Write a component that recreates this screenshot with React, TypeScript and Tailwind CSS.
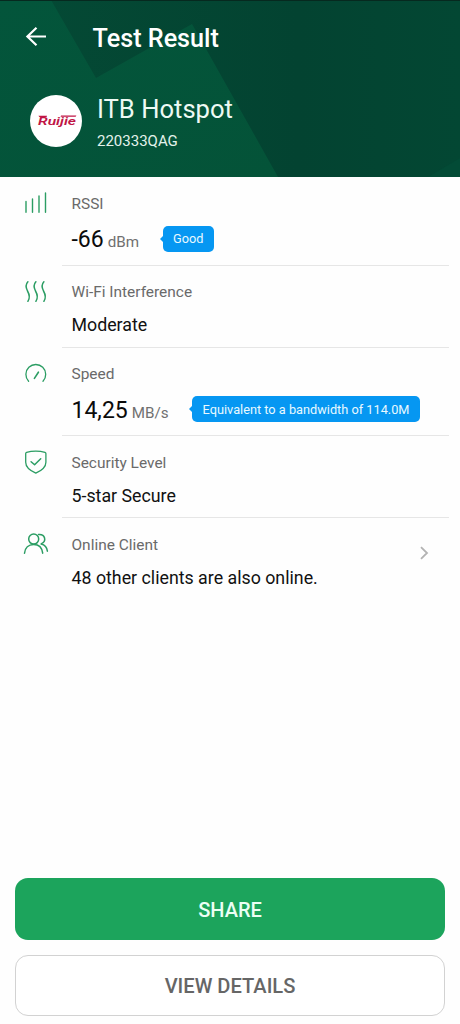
import type { ReactNode } from "react";

function Icon({ children, width = 1.3 }: { children: ReactNode; width?: number }) {
  return (
    <svg viewBox="0 0 26 26" className="h-[26px] w-[26px]" fill="none" stroke="#2b9d63" strokeWidth={width} strokeLinecap="round" strokeLinejoin="round" aria-hidden="true">
      {children}
    </svg>
  );
}

const SignalIcon = () => (
  <Icon width={1.4}>
    <path d="M3 11.5V22.3M9.5 9V22.3M16 6V22.3M22.5 3V22.3" />
  </Icon>
);

const WavesIcon = () => (
  <Icon width={1.5}>
    <path d="M4.9 2.8C2.2 5.7 2.7 8.6 4.5 12C6.7 15.8 7.2 18.8 4.9 22.3" />
    <path d="M12.9 2.8C10.2 5.7 10.7 8.6 12.5 12C14.7 15.8 15.2 18.8 12.9 22.3" />
    <path d="M20.9 2.8C18.2 5.7 18.7 8.6 20.5 12C22.7 15.8 23.2 18.8 20.9 22.3" />
  </Icon>
);

const GaugeIcon = () => (
  <Icon>
    <path d="M5.6 20.2A9.9 9.9 0 1 1 20 20.2" />
    <path d="M11.4 17.4L15.4 11.2" strokeWidth={1.6} />
  </Icon>
);

const ShieldIcon = () => (
  <Icon>
    <path d="M12.8 2.2C9.5 2.2 6 2.7 3.6 3.4Q2.7 3.7 2.7 4.6V13.3C2.7 18.9 8 22.1 12.8 24.2C17.6 22.1 22.9 18.9 22.9 13.3V4.6Q22.9 3.7 22 3.4C19.6 2.7 16.1 2.2 12.8 2.2Z" />
    <path d="M8.1 12.7L11.6 15.7L17.7 9.7" strokeWidth={1.5} />
  </Icon>
);

const ClientsIcon = () => (
  <Icon width={1.5}>
    <circle cx="10.7" cy="8.1" r="5" />
    <path d="M1.5 22.2C2 16.8 5.6 13.4 10.7 13.4S19.1 16.8 19.7 22.2" />
    <path d="M15.5 3.5C22.3 2.9 24 10.4 18.1 12.9C22 13.7 24 16.3 24.4 20.2" />
  </Icon>
);

function Tag({ children }: { children: ReactNode }) {
  return (
    <span className="mb-[4px] ml-[23.5px] flex h-[26px] items-center rounded-[5px] bg-[#0697f2] px-[10.5px] text-[12.75px] whitespace-nowrap text-[#e9f9ff]">
      <svg viewBox="0 0 4 8" className="-ml-[13.5px] mr-[9.5px] h-2 w-1" fill="#0697f2" aria-hidden="true">
        <path d="M4 0L0 4L4 8Z" />
      </svg>
      {children}
    </span>
  );
}

interface RowProps {
  icon: ReactNode;
  label: string;
  value: string;
  unit?: string;
  tag?: string;
  link?: boolean;
  last?: boolean;
}

function Row({ icon, label, value, unit, tag, link, last }: RowProps) {
  return (
    <section className={`flex pr-[11px] pl-[23px] ${unit ? "h-[88.5px]" : "h-[82px]"}`}>
      <div className="w-[39px] shrink-0 pt-[13px]">{icon}</div>
      <div className={`flex flex-1 items-start justify-between pt-[15.8px] pl-[9.5px] ${last ? "" : "border-b border-[#e6e6e6]"}`}>
        <div>
          <h2 className="text-[15.45px] leading-[22px] text-[#6a6a6a]">{label}</h2>
          {unit ? (
            <div className="mt-[11px] flex h-[30px] items-center">
              <p className="flex items-baseline whitespace-pre pt-px leading-[30px] text-[#707070]">
                <span className="text-[23px] text-[#0b0b0b]">{value}</span>
                <span className="ml-1 text-[15.2px]">{unit}</span>
              </p>
              <Tag>{tag}</Tag>
            </div>
          ) : (
            <p className="mt-[7px] text-[17.8px] leading-[30px] whitespace-nowrap text-[#111]">{value}</p>
          )}
        </div>
        {link && (
          <svg viewBox="0 0 10 14" className="mt-[12.5px] mr-5 h-3.5 w-2.5" fill="none" stroke="#b3b3b3" strokeWidth="1.8" aria-hidden="true">
            <path d="M2 1.2L8 7L2 12.8" />
          </svg>
        )}
      </div>
    </section>
  );
}

function Logo() {
  return (
    <div className="flex h-[52px] w-[52px] shrink-0 items-center justify-center rounded-full bg-white">
      <svg viewBox="0 0 52 52" className="h-full w-full" role="img" aria-label="Ruijie">
        <text x="8" y="29.5" textLength="38" lengthAdjust="spacingAndGlyphs" fontFamily="Roboto, sans-serif" fontSize="11.8" fontWeight="600" fontStyle="italic" fill="#c01545">
          Ruijie
        </text>
        <path d="M8.4 20.8H17L16.6 22.1H9.4ZM31 20.6H46.4L45.6 21.8H30.6Z" fill="#c01545" />
      </svg>
    </div>
  );
}

export default function App() {
  return (
    <main className="flex h-[1024px] w-[460px] flex-col bg-[#fefefe] font-[Roboto,sans-serif]">
      <header className="relative h-[177px] shrink-0 overflow-hidden bg-[#034733] text-white">
        <svg viewBox="0 0 460 177" className="absolute inset-0 h-full w-full" aria-hidden="true">
          <defs>
            <linearGradient id="shade" x1="0" y1="0" x2="1" y2="0">
              <stop offset="0" stopColor="#044a35" />
              <stop offset=".65" stopColor="#034331" />
              <stop offset="1" stopColor="#034733" />
            </linearGradient>
            <linearGradient id="facet" x1="0" y1="0" x2="1" y2="1">
              <stop offset="0" stopColor="#03553b" />
              <stop offset="1" stopColor="#045338" />
            </linearGradient>
          </defs>
          <path d="M0 0H460V177H0Z" fill="url(#shade)" />
          <path d="M0 0H51L96 78L192 24L278 177H0Z" fill="url(#facet)" />
          <path d="M460 158V177H428Z" fill="#034b36" />
          <path d="M0 0H460V1H0Z" fill="#06291f" />
        </svg>
        <div className="relative flex h-[76px] items-center pl-[25px]">
          <svg viewBox="0 0 22 20" className="-mt-[3px] h-5 w-[22px]" fill="none" stroke="currentColor" strokeWidth="2.2" aria-hidden="true">
            <path d="M21 9.5H2.5M11.5 .8L2.4 9.5L11.5 18.2" />
          </svg>
          <h1 className="ml-[45.5px] pt-[2px] text-[25.2px] leading-8 font-medium">Test Result</h1>
        </div>
        <div className="relative flex pt-[19px] pl-[30px]">
          <Logo />
          <div className="-mt-[2px] ml-[15px]">
            <p className="text-[25.6px] leading-[32px] text-[#eefaf4]">ITB Hotspot</p>
            <p className="mt-[6px] text-[15px] leading-[20px] text-[#e3f2eb]">220333QAG</p>
          </div>
        </div>
      </header>

      <div className="flex-1">
        <Row icon={<SignalIcon />} label="RSSI" value="-66" unit="dBm" tag="Good" />
        <Row icon={<WavesIcon />} label="Wi-Fi Interference" value="Moderate" />
        <Row icon={<GaugeIcon />} label="Speed" value="14,25" unit="MB/s" tag="Equivalent to a bandwidth of 114.0M" />
        <Row icon={<ShieldIcon />} label="Security Level" value="5-star Secure" />
        <Row icon={<ClientsIcon />} label="Online Client" value="48 other clients are also online." link last />
      </div>

      <footer className="flex flex-col gap-[15px] px-[15px] pb-[8px]">
        <button className="h-[62px] rounded-[13px] bg-[#1ca45c] pt-px text-[20px] font-medium text-[#ecfff4]">SHARE</button>
        <button className="h-[61px] rounded-[13px] border border-[#d2d2d2] bg-white pt-px text-[20.1px] font-medium text-[#666]">VIEW DETAILS</button>
      </footer>
    </main>
  );
}
